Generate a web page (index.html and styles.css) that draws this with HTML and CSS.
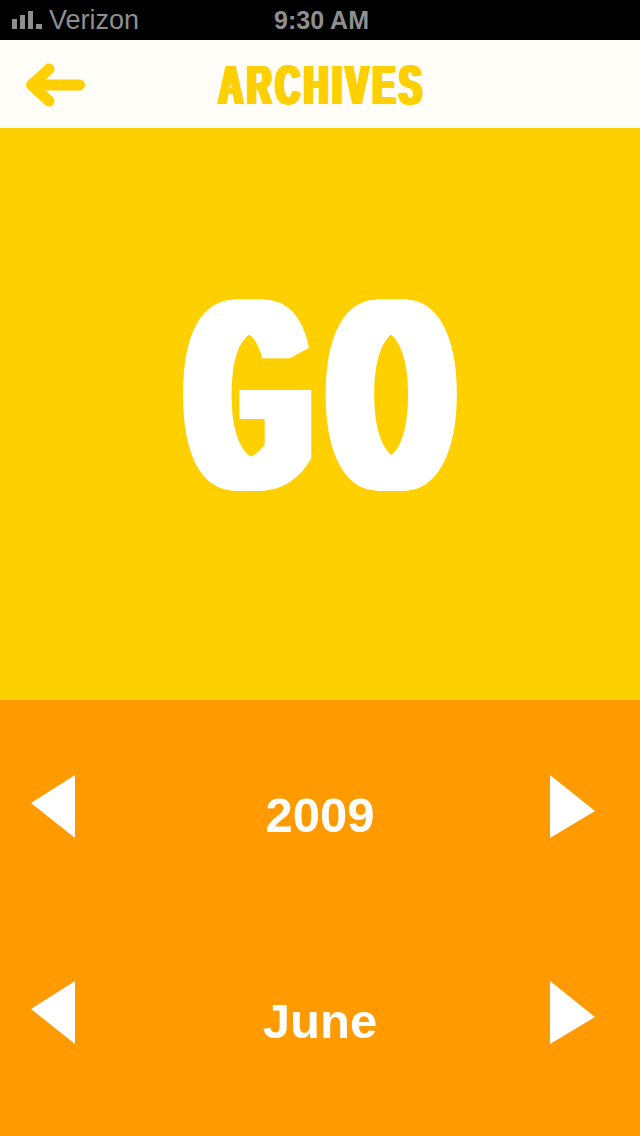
FILE: index.html
```html
<!DOCTYPE html>
<html lang="en">
<head>
<meta charset="utf-8">
<title>Archives</title>
<link rel="stylesheet" href="styles.css">
</head>
<body>
<div class="screen">
  <div class="status">
    <div class="carrier">
      <svg class="signal" width="31" height="20" viewBox="0 0 31 20" aria-hidden="true">
        <rect x="0" y="8" width="5" height="10" fill="#8f8f8f"/>
        <rect x="8" y="4" width="5" height="14" fill="#8f8f8f"/>
        <rect x="16" y="0" width="5" height="18" fill="#8f8f8f"/>
        <rect x="24" y="13" width="6" height="5" fill="#8f8f8f"/>
      </svg>
      <span class="carrier-name">Verizon</span>
    </div>
    <div class="time">9:30 AM</div>
    <div class="status-right"></div>
  </div>

  <header class="nav">
    <svg class="back" width="90" height="88" viewBox="0 0 90 88" aria-label="Back">
      <path d="M49 29 L31.5 45 L49 61 M31.5 45 H79.5" fill="none" stroke="#ffd000" stroke-width="11" stroke-linecap="round" stroke-linejoin="round"/>
    </svg>
    <h1 class="title">ARCHIVES</h1>
    <div class="nav-right"></div>
  </header>

  <main class="hero">
    <span class="go">GO</span>
  </main>

  <section class="picker">
    <div class="row">
      <svg class="tri tri-left" width="45" height="64" viewBox="0 0 45 64" aria-label="Previous year">
        <polygon points="44,0 0,28 44,63" fill="#fff"/>
      </svg>
      <span class="value">2009</span>
      <svg class="tri tri-right" width="46" height="64" viewBox="0 0 46 64" aria-label="Next year">
        <polygon points="0,0 45,36 0,63" fill="#fff"/>
      </svg>
    </div>
    <div class="row">
      <svg class="tri tri-left" width="45" height="64" viewBox="0 0 45 64" aria-label="Previous month">
        <polygon points="44,0 0,28 44,63" fill="#fff"/>
      </svg>
      <span class="value">June</span>
      <svg class="tri tri-right" width="46" height="64" viewBox="0 0 46 64" aria-label="Next month">
        <polygon points="0,0 45,36 0,63" fill="#fff"/>
      </svg>
    </div>
  </section>
</div>
</body>
</html>
```

FILE: styles.css
```css
html, body {
  margin: 0;
  padding: 0;
  background: #ff9a00;
}

.screen {
  width: 640px;
  height: 1136px;
  display: flex;
  flex-direction: column;
  overflow: hidden;
  font-family: "Liberation Sans", Arial, sans-serif;
}

/* status bar */
.status {
  height: 40px;
  flex: none;
  background: #000;
  display: grid;
  grid-template-columns: 1fr auto 1fr;
  align-items: center;
  color: #8f8f8f;
  font-size: 25px;
}

.carrier {
  display: flex;
  align-items: center;
  padding-left: 12px;
}

.signal {
  display: block;
  margin-top: 1px;
}

.carrier-name {
  margin-left: 6px;
  font-size: 27px;
  line-height: 1;
}

.time {
  font-weight: bold;
  line-height: 1;
  padding-left: 3px;
}

/* navigation header */
.nav {
  height: 88px;
  flex: none;
  background: #fefdf7;
  display: grid;
  grid-template-columns: 1fr auto 1fr;
  align-items: center;
}

.back {
  display: block;
}

.title {
  margin: 0;
  font-size: 56px;
  font-weight: bold;
  line-height: 1;
  color: #ffd000;
  letter-spacing: 7px;
  padding-left: 7px;
  transform: scaleX(0.6);
  padding-top: 2px;
  text-shadow:
    1px 0 #ffd000, -1px 0 #ffd000,
    2px 0 #ffd000, -2px 0 #ffd000,
    3px 0 #ffd000, -3px 0 #ffd000,
    3.7px 0 #ffd000, -3.7px 0 #ffd000;
}

/* hero */
.hero {
  height: 572px;
  flex: none;
  background: #ffd000;
  display: flex;
  align-items: center;
  justify-content: center;
  padding-bottom: 38px;
  box-sizing: border-box;
}

.go {
  display: inline-block;
  font-size: 270px;
  font-weight: bold;
  line-height: 1;
  color: #fff;
  letter-spacing: 46px;
  padding-left: 46px;
  transform: scaleX(0.557);
  text-shadow:
    3px 0 #fff, -3px 0 #fff,
    6px 0 #fff, -6px 0 #fff,
    9px 0 #fff, -9px 0 #fff,
    12px 0 #fff, -12px 0 #fff,
    15px 0 #fff, -15px 0 #fff,
    18px 0 #fff, -18px 0 #fff,
    21px 0 #fff, -21px 0 #fff,
    24px 0 #fff, -24px 0 #fff;
}

/* picker */
.picker {
  flex: 1;
  background: #ff9a00;
  padding-top: 4px;
  display: flex;
  flex-direction: column;
}

.row {
  height: 206px;
  display: grid;
  grid-template-columns: 1fr auto 1fr;
  align-items: center;
}

.tri {
  display: block;
}

.tri-left {
  justify-self: start;
  margin-left: 31px;
}

.tri-right {
  justify-self: end;
  margin-right: 44px;
}

.value {
  font-size: 49px;
  font-weight: bold;
  line-height: 1;
  color: #fff;
  margin-top: 17px;
}
```
